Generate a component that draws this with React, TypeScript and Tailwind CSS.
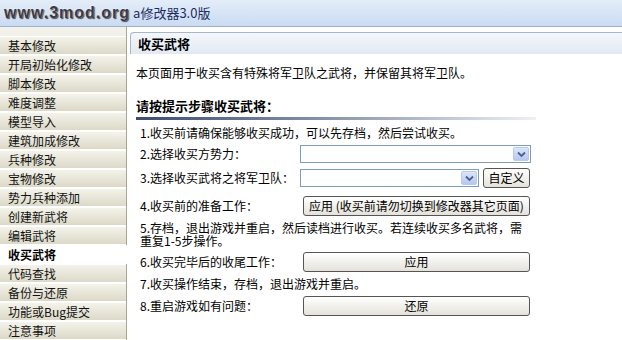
import React from 'react';

const menuItems = [
  '基本修改',
  '开局初始化修改',
  '脚本修改',
  '难度调整',
  '模型导入',
  '建筑加成修改',
  '兵种修改',
  '宝物修改',
  '势力兵种添加',
  '创建新武将',
  '编辑武将',
  '收买武将',
  '代码查找',
  '备份与还原',
  '功能或Bug提交',
  '注意事项',
];

const ACTIVE = '收买武将';

const Chevron: React.FC = () => (
  <svg width="9" height="7" viewBox="0 0 9 7" className="block">
    <path d="M1 1.5 L4.5 5 L8 1.5" fill="none" stroke="#4d6185" strokeWidth="1.8" />
  </svg>
);

const Select: React.FC<{ width: string }> = ({ width }) => (
  <div className={`${width} h-[18px] flex bg-white border border-[#7f9db9]`}>
    <div className="flex-1" />
    <div className="w-[16px] m-[1px] rounded-[2px] bg-gradient-to-b from-[#dbe6fb] to-[#b4c8f2] border border-[#b9cbec] flex items-center justify-center">
      <Chevron />
    </div>
  </div>
);

const XpButton: React.FC<{ label: string; className?: string }> = ({ label, className }) => (
  <button
    className={`${className ?? ''} rounded-[3px] border border-[#555] bg-gradient-to-b from-white to-[#e4e2da] text-[12px] text-black leading-none flex items-center justify-center`}
  >
    {label}
  </button>
);

const Sidebar: React.FC = () => (
  <div className="w-[127px] shrink-0 pt-[9px] bg-gradient-to-b from-[#f2f1ea] to-[#ebe9df] border-r border-[#a7a596]">
    {menuItems.map((item) => {
      const active = item === ACTIVE;
      return (
        <div
          key={item}
          className={
            active
              ? 'h-[19px] pl-[8px] flex items-center bg-white font-bold text-black text-[12px] -mr-px'
              : 'h-[19px] pl-[8px] flex items-center bg-gradient-to-b from-[#f4f3ea] to-[#dcd9c8] border-t border-white border-b border-[#b3b09f] text-[#111] text-[12px]'
          }
        >
          {item}
        </div>
      );
    })}
  </div>
);

const App: React.FC = () => {
  return (
    <div
      className="w-[622px] h-[340px] overflow-hidden bg-white flex flex-col"
      style={{ fontFamily: '"Noto Sans CJK SC", "Liberation Sans", sans-serif' }}
    >
      {/* title bar */}
      <div className="h-[27px] shrink-0 flex items-center pl-[4px] bg-gradient-to-b from-[#e4edf9] to-[#c9dbf3] border-b border-[#9fb1c9]">
        <span
          className="text-[16px] font-bold tracking-[1px] text-[#3a3a4a]"
          style={{ fontFamily: '"Liberation Sans", sans-serif', textShadow: '0 0 2px #fff, 1px 1px 1px #222' }}
        >
          www.3mod.org
        </span>
        <span className="ml-[3px] text-[13px] text-[#1d2c5e]">a修改器3.0版</span>
      </div>

      <div className="flex flex-1 min-h-0">
        <Sidebar />

        <div className="flex-1 pl-[3px] pt-[5px]">
          {/* panel header */}
          <div className="h-[22px] flex items-center pl-[7px] rounded-tl-[4px] border-t border-l border-[#a8b6c8] bg-gradient-to-b from-[#f4f7fb] to-[#e2e9f2] text-[13px] font-bold text-black">
            收买武将
          </div>

          <div className="pl-[6px] text-[12px] text-black">
            <div className="mt-[12px] h-[14px] leading-[14px]">
              本页面用于收买含有特殊将军卫队之武将，并保留其将军卫队。
            </div>

            <div className="mt-[18px] h-[16px] leading-[16px] text-[13px] font-bold">
              请按提示步骤收买武将：
            </div>
            <div className="mt-[3px] h-[3px] w-[400px] bg-gradient-to-r from-[#3f4c70] via-[#8c97ae] to-[#eef0f4]" />

            <div className="pl-[4px]">
              <div className="mt-[3px] h-[20px] flex items-center">
                1.收买前请确保能够收买成功，可以先存档，然后尝试收买。
              </div>

              <div className="mt-[1px] h-[20px] flex items-center">
                <div className="w-[160px]">2.选择收买方势力：</div>
                <Select width="w-[231px]" />
              </div>

              <div className="mt-[3px] h-[22px] flex items-center">
                <div className="w-[160px]">3.选择收买武将之将军卫队：</div>
                <Select width="w-[179px]" />
                <XpButton label="自定义" className="ml-[4px] w-[47px] h-[20px]" />
              </div>

              <div className="mt-[6px] h-[21px] flex items-center">
                <div className="w-[163px]">4.收买前的准备工作：</div>
                <XpButton label="应用 (收买前请勿切换到修改器其它页面)" className="w-[227px] h-[20px]" />
              </div>

              <div className="mt-[5px] w-[390px] leading-[13px]">
                5.存档，退出游戏并重启，然后读档进行收买。若连续收买多名武将，需重复1-5步操作。
              </div>

              <div className="mt-[4px] h-[22px] flex items-center">
                <div className="w-[163px]">6.收买完毕后的收尾工作：</div>
                <XpButton label="应用" className="w-[227px] h-[20px]" />
              </div>

              <div className="mt-[4px] h-[14px] leading-[14px]">
                7.收买操作结束，存档，退出游戏并重启。
              </div>

              <div className="mt-[4px] h-[22px] flex items-center">
                <div className="w-[163px]">8.重启游戏如有问题：</div>
                <XpButton label="还原" className="w-[227px] h-[20px]" />
              </div>
            </div>
          </div>
        </div>
      </div>
    </div>
  );
};

export default App;
